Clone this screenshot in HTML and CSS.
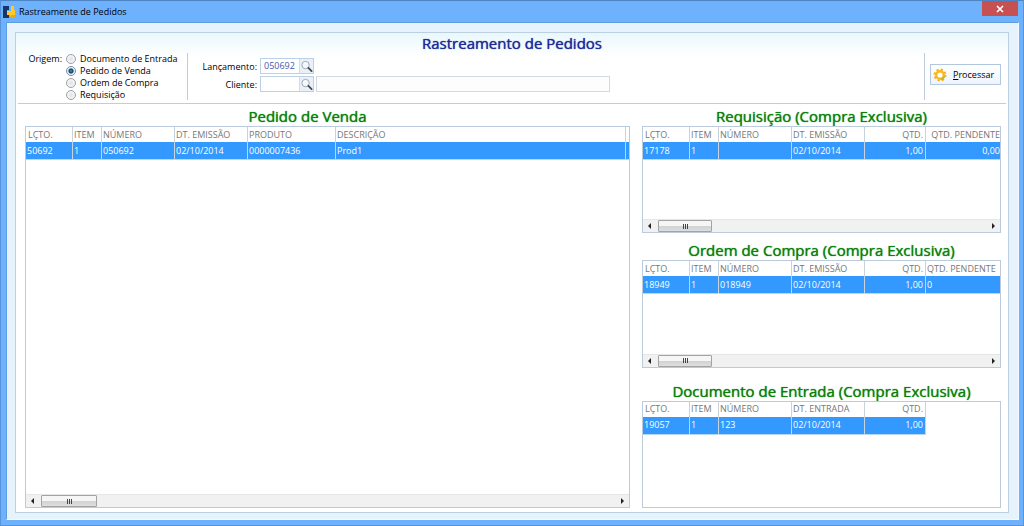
FILE: index.html
```html
<!DOCTYPE html>
<html lang="pt-BR">
<head>
<meta charset="utf-8">
<title>Rastreamente de Pedidos</title>
<link rel="stylesheet" href="styles.css">
</head>
<body>
<svg class="defs" aria-hidden="true">
  <symbol id="lens" viewBox="0 0 14 14">
    <circle cx="6" cy="6" r="4" fill="#f4f8fc" stroke="#9aa3ae"/>
    <path d="M4 5a2.500 2.500 0 0 1 2-1.500" fill="none" stroke="#fff"/>
    <path d="M9 9l3.500 3.500" stroke="#444b55" stroke-width="2" stroke-linecap="round"/>
  </symbol>
</svg>
<div class="window">
  <header class="titlebar">
    <svg class="app-icon" viewBox="0 0 12 14" aria-hidden="true">
      <path d="M0 1h6v4H4v4h2v4H0z" fill="#15356b"/>
      <path d="M8 1h3v4h1v8H7v-3H4V6h4z" fill="#ffc928"/>
      <path d="M9 10h3v3H7v-2z" fill="#e9a61c"/>
    </svg>
    <span class="window-title">Rastreamente de Pedidos</span>
    <button class="close" type="button" aria-label="Fechar"><svg viewBox="0 0 8 8" width="8" height="8"><path d="M1 1l6 6M7 1L1 7" stroke="#fff" stroke-width="1.600"/></svg></button>
  </header>
  <main class="client">
    <div class="panel">
      <form class="filters">
        <h1>Rastreamento de Pedidos</h1>
        <div class="filter-row">
          <div class="origin" role="radiogroup" aria-labelledby="origin-label">
            <span id="origin-label">Origem:</span>
            <div class="options">
              <label><input type="radio" name="origem">Documento de Entrada</label>
              <label><input type="radio" name="origem" checked>Pedido de Venda</label>
              <label><input type="radio" name="origem">Ordem de Compra</label>
              <label><input type="radio" name="origem">Requisição</label>
            </div>
          </div>
          <div class="fields">
            <label for="lancamento">Lançamento:</label>
            <div class="lookup"><input id="lancamento" type="text" value="050692"><button type="button" aria-label="Buscar lançamento"><svg><use href="#lens"/></svg></button></div>
            <label class="next" for="cliente">Cliente:</label>
            <div class="lookup"><input id="cliente" type="text"><button type="button" aria-label="Buscar cliente"><svg><use href="#lens"/></svg></button></div>
            <input class="client-name" type="text" aria-label="Nome do cliente" readonly>
          </div>
          <div class="action">
            <button class="process" type="button">
              <svg viewBox="0 0 14 14" aria-hidden="true">
                <circle cx="7" cy="7" r="5.500" fill="none" stroke="#f6b41a" stroke-width="2" stroke-dasharray="2.300 2.020"/>
                <circle cx="7" cy="7" r="3.800" fill="#fff" stroke="#fbb81d" stroke-width="2.400"/>
                <path d="M8 11.500a5 5 0 0 0 3.500-3" fill="none" stroke="#a9bf3a" stroke-width="1.600"/>
              </svg>
              <span><u>P</u>rocessar</span>
            </button>
          </div>
        </div>
      </form>
      <div class="content">
        <section class="block">
          <h2 class="main-title">Pedido de Venda</h2>
          <div class="grid">
            <table>
              <colgroup><col class="c-lcto"><col class="c-item"><col class="c-num"><col class="c-date"><col class="c-prod"><col><col class="c-edge"></colgroup>
              <thead><tr><th>LÇTO.</th><th>ITEM</th><th>NÚMERO</th><th>DT. EMISSÃO</th><th>PRODUTO</th><th>DESCRIÇÃO</th><th></th></tr></thead>
              <tbody><tr><td>50692</td><td>1</td><td>050692</td><td>02/10/2014</td><td>0000007436</td><td>Prod1</td><td></td></tr></tbody>
            </table>
            <div class="scroll"><i class="arrow left"></i><div class="thumb wide"><i></i><i></i><i></i></div><i class="arrow right"></i></div>
          </div>
        </section>
        <div class="side">
          <section class="block">
            <h2>Requisição (Compra Exclusiva)</h2>
            <div class="grid">
              <table>
                <colgroup><col class="c-lcto"><col class="c-item"><col class="c-num"><col class="c-date"><col class="c-qty"><col></colgroup>
                <thead><tr><th>LÇTO.</th><th>ITEM</th><th>NÚMERO</th><th>DT. EMISSÃO</th><th class="r">QTD.</th><th class="r flush">QTD. PENDENTE</th></tr></thead>
                <tbody><tr><td>17178</td><td>1</td><td></td><td>02/10/2014</td><td class="r">1,00</td><td class="r flush">0,00</td></tr></tbody>
              </table>
              <div class="scroll"><i class="arrow left"></i><div class="thumb"><i></i><i></i><i></i></div><i class="arrow right"></i></div>
            </div>
          </section>
          <section class="block">
            <h2>Ordem de Compra (Compra Exclusiva)</h2>
            <div class="grid">
              <table>
                <colgroup><col class="c-lcto"><col class="c-item"><col class="c-num"><col class="c-date"><col class="c-qty"><col></colgroup>
                <thead><tr><th>LÇTO.</th><th>ITEM</th><th>NÚMERO</th><th>DT. EMISSÃO</th><th class="r">QTD.</th><th>QTD. PENDENTE</th></tr></thead>
                <tbody><tr><td>18949</td><td>1</td><td>018949</td><td>02/10/2014</td><td class="r">1,00</td><td>0</td></tr></tbody>
              </table>
              <div class="scroll"><i class="arrow left"></i><div class="thumb"><i></i><i></i><i></i></div><i class="arrow right"></i></div>
            </div>
          </section>
          <section class="block last">
            <h2>Documento de Entrada (Compra Exclusiva)</h2>
            <div class="grid">
              <table class="short">
                <colgroup><col class="c-lcto"><col class="c-item"><col class="c-num"><col class="c-date"><col class="c-qty"></colgroup>
                <thead><tr><th>LÇTO.</th><th>ITEM</th><th>NÚMERO</th><th>DT. ENTRADA</th><th class="r">QTD.</th></tr></thead>
                <tbody><tr><td>19057</td><td>1</td><td>123</td><td>02/10/2014</td><td class="r">1,00</td></tr></tbody>
              </table>
            </div>
          </section>
        </div>
      </div>
    </div>
  </main>
</div>
</body>
</html>
```
FILE: styles.css
```css
* { box-sizing: border-box; }
body { margin: 0; font: 9px/12px "Open Sans", "Noto Sans", sans-serif; color: #000; }
button, input { font: inherit; margin: 0; padding: 0; }
.defs { display: none; }

.window {
  min-height: 100vh;
  display: flex;
  flex-direction: column;
  padding: 0 4px 5px 5px;
  background: #6eb1fd;
  border: 1px solid #5594dd;
  border-top-color: #4d84c4;
}
.titlebar { height: 21px; flex: none; display: flex; align-items: center; gap: 4px; }
.app-icon { width: 12px; height: 14px; margin-left: -3px; }
.window-title { flex: 1; }
.close {
  align-self: flex-start;
  width: 36px;
  height: 15px;
  margin-right: 1px;
  border: 0;
  background: #c75052;
  display: grid;
  place-items: center;
}
.client {
  flex: 1;
  display: flex;
  padding: 9px 9px 6px 8px;
  background: #e6f3fd;
  border: 1px solid #dbeafb;
  border-color: #5e9be0 #f4faff #f4faff #5e9be0;
}
.panel {
  flex: 1;
  min-width: 0;
  display: flex;
  flex-direction: column;
  background: linear-gradient(#e9f8fe, #fff 24px);
  border: 1px solid #bcd0df;
  padding: 0 2px 4px;
}

.filters { border-bottom: 1px solid #c3cbdc; padding: 2px 0 3px; }
h1, h2 {
  margin: 0;
  padding-bottom: 2px;
  text-align: center;
  font-weight: 400;
  font-size: 15px;
  line-height: 16px;
  text-shadow: 0 0 1px currentColor;
}
h1 { color: #1c2a96; }
h2 { color: #0b800b; }
.filter-row { display: flex; height: 47px; }
.origin { display: flex; gap: 4px; padding-left: 10px; width: 170px; border-right: 1px solid #bfccdc; white-space: nowrap; }
#origin-label { width: 34px; text-align: right; }
.options { display: flex; flex-direction: column; }
.options label { display: flex; align-items: center; gap: 4px; height: 12px; }
.options input {
  appearance: none;
  width: 10px;
  height: 10px;
  border: 1px solid #9a9fa6;
  border-radius: 50%;
  background: radial-gradient(#dfe2e6, #fff);
}
.options input:checked { border-color: #6f8fa8; background: radial-gradient(#3fa0cf 0, #123a5c 2px, #cfe3f0 3px, #fff 4px); }
.fields {
  flex: 1;
  display: grid;
  grid-template-columns: 68px 54px minmax(0, 294px);
  grid-template-rows: 16px 16px;
  column-gap: 2px;
  row-gap: 2px;
  padding: 5px 0 0 2px;
  align-items: center;
}
.fields label { text-align: right; padding: 1px 1px 0 0; }
.fields .next { grid-column: 1; }
.lookup { display: flex; height: 16px; border: 1px solid #bcd0e8; background: #fff; }
.lookup input { flex: 1; min-width: 0; width: 0; border: 0; padding-left: 3px; color: #3f5cae; background: none; }
.lookup button { width: 14px; border: 1px solid #d3dce8; border-width: 0 0 0 1px; background: #e9f0f8; }
.lookup svg { display: block; width: 13px; height: 14px; }
.client-name { height: 16px; width: 100%; border: 1px solid #d3dae2; background: #fdfdfd; }
.action { width: 82px; padding: 11px 5px 0; border-left: 1px solid #bfccdc; }
.process {
  width: 100%;
  height: 21px;
  display: flex;
  align-items: center;
  gap: 6px;
  padding: 0 4px 0 2px;
  color: #000;
  border: 1px solid #b3c7df;
  background: linear-gradient(#fff, #edf4fb);
}
.process svg { width: 14px; height: 14px; flex: none; }

.content {
  flex: 1;
  display: grid;
  grid-template-columns: minmax(0, 605fr) minmax(0, 359fr);
  gap: 12px;
  padding: 4px 5px 0 7px;
}
.block { display: flex; flex-direction: column; flex: 1; min-width: 0; }
.side { display: flex; flex-direction: column; gap: 9px; min-width: 0; }
.side .last { margin-top: 6px; }
.main-title { padding-right: 40px; }
.grid { flex: 1; display: flex; flex-direction: column; border: 1px solid #bccbdb; background: #fff; overflow: hidden; }
table { width: 100%; table-layout: fixed; border-collapse: separate; border-spacing: 0; }
table.short { width: 283px; }
th, td { padding: 0 2px 0 1px; text-align: left; font-weight: 400; white-space: nowrap; overflow: hidden; border-right: 1px solid #c8d3de; }
th { height: 15px; color: #777; }
td { height: 18px; color: #fff; background: #3399fe; border-bottom: 1px solid #b9d8f8; }
th:first-child { padding-left: 2px; }
th:last-child, td:last-child { border-right: 0; }
th.r, td.r { text-align: right; }
th.flush, td.flush { padding-right: 0; }
.short th:last-child, .short td:last-child { border-right: 1px solid #c8d3de; }
.c-lcto { width: 47px; }
.c-item { width: 29px; }
.c-num, .c-date { width: 73px; }
.c-prod { width: 88px; }
.c-qty { width: 61px; }
.c-edge { width: 3px; }

.scroll { margin-top: auto; height: 13px; display: flex; align-items: center; padding: 0 5px; background: #f1f1f1; border-top: 1px solid #e6e6e6; }
.arrow { border: 3px solid transparent; width: 0; height: 0; }
.arrow.left { border-right-color: #222; border-left-width: 0; }
.arrow.right { border-left-color: #222; border-right-width: 0; margin-left: auto; }
.thumb { margin-left: 7px; width: 54px; height: 12px; display: flex; justify-content: center; align-items: center; gap: 1px; border: 1px solid #a3a3a3; border-radius: 1px; background: linear-gradient(#f6f6f6 45%, #d3d3d5 55%, #dedede); }
.thumb.wide { width: 56px; }
.thumb i { width: 1px; height: 5px; background: #444; }
```
